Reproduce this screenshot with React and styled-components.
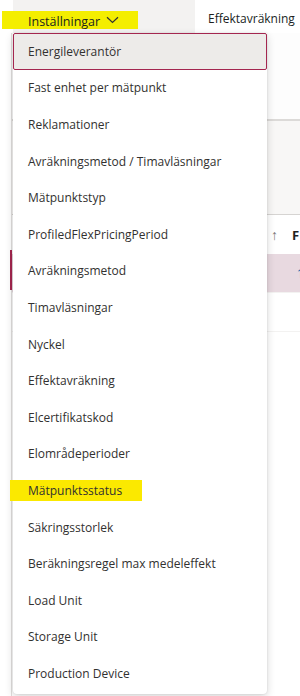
import React from 'react'
import styled, { createGlobalStyle } from 'styled-components'

const GlobalStyle = createGlobalStyle`
  html, body {
    margin: 0;
    padding: 0;
    background: #ffffff;
    font-family: "Open Sans", "Noto Sans", sans-serif;
    color: #323130;
  }
`

const items = [
    'Energileverantör',
    'Fast enhet per mätpunkt',
    'Reklamationer',
    'Avräkningsmetod / Timavläsningar',
    'Mätpunktstyp',
    'ProfiledFlexPricingPeriod',
    'Avräkningsmetod',
    'Timavläsningar',
    'Nyckel',
    'Effektavräkning',
    'Elcertifikatskod',
    'Elområdeperioder',
    'Mätpunktsstatus',
    'Säkringsstorlek',
    'Beräkningsregel max medeleffekt',
    'Load Unit',
    'Storage Unit',
    'Production Device',
]

function App() {
    return (
        <Page>
            <GlobalStyle />
            <TopBar>
                <Gutter />
                <TabStrip>
                    <Tab>
                        <Marker />
                        <span>Inställningar</span>
                        <svg width="13" height="8" viewBox="0 0 13 8">
                            <path d="M1 1.2 L6.5 6.4 L12 1.2" fill="none" stroke="#323130" strokeWidth="1.2" />
                        </svg>
                    </Tab>
                </TabStrip>
                <TabLabel>Effektavräkning</TabLabel>
            </TopBar>

            <Body>
                <SideRail>
                    <RailMark />
                </SideRail>
                <Main>
                    <Blank />
                    <CommandBand />
                    <HeaderRow>
                        <span className="arrow">↑</span>
                        <span className="col">F</span>
                    </HeaderRow>
                    <DataRow selected>
                        <span>1</span>
                    </DataRow>
                    <DataRow />
                </Main>
            </Body>

            {/* dropdown menu lies over the page */}
            <Menu>
                {items.map((label, i) => (
                    <MenuItem key={label} active={i === 0}>
                        {i === 12 ? <Highlight>{label}</Highlight> : label}
                    </MenuItem>
                ))}
            </Menu>
        </Page>
    )
}

export default App

const Page = styled.div`
    position: relative;
    width: 300px;
    height: 696px;
    overflow: hidden;
    background: #fff;
`

const TopBar = styled.div`
    display: flex;
    align-items: stretch;
    height: 33px;
`

const Gutter = styled.div`
    width: 13px;
    flex: none;
`

const TabStrip = styled.div`
    width: 182px;
    background: #f3f2f1;
    display: flex;
    align-items: flex-end;
`

const Tab = styled.div`
    position: relative;
    display: flex;
    align-items: center;
    gap: 6px;
    padding: 0 0 3px 15px;
    font-size: 12.5px;
    color: #201f1e;

    span, svg {
        position: relative;
    }
    svg {
        margin-top: -4px;
    }
`

// hand-drawn yellow highlighter stroke
const Marker = styled.div`
    position: absolute;
    left: -11px;
    top: -2px;
    width: 136px;
    height: 18px;
    background: #f4ee00;
    filter: blur(0.6px);
`

const TabLabel = styled.div`
    padding: 10px 0 0 13px;
    font-size: 12px;
    white-space: nowrap;
    color: #201f1e;
`

const Body = styled.div`
    display: flex;
    height: 663px;
`

const SideRail = styled.div`
    width: 11px;
    flex: none;
    border-right: 1px solid #e1dfdd;
    position: relative;
`

const RailMark = styled.div`
    position: absolute;
    right: -1px;
    top: 217px;
    width: 2px;
    height: 40px;
    background: #a4264f;
`

const Main = styled.div`
    flex: 1;
    display: flex;
    flex-direction: column;
`

const Blank = styled.div`
    height: 86px;
    background: #fdfdfd;
`

const CommandBand = styled.div`
    height: 93px;
    background: #f8f7f6;
    border-top: 2px solid #dcdad8;
    border-bottom: 1px solid #d6d4d2;
`

const HeaderRow = styled.div`
    height: 39px;
    display: flex;
    align-items: center;
    padding-left: 259px;
    font-size: 13px;

    .arrow {
        color: #7a7574;
        font-size: 14px;
    }
    .col {
        margin-left: 14px;
        font-weight: 700;
        color: #201f1e;
    }
`

const DataRow = styled.div`
    height: 38px;
    display: flex;
    align-items: center;
    padding-left: 285px;
    font-size: 12px;
    color: #0b5cad;
    background: ${p => (p.selected ? '#e8d9e0' : '#fff')};
    border-bottom: 1px solid #f3f2f1;
`

const Menu = styled.div`
    position: absolute;
    left: 13px;
    top: 33px;
    width: 254px;
    background: #fff;
    border-radius: 0 0 4px 4px;
    box-shadow: 0 3px 8px rgba(0, 0, 0, 0.16), 0 0 2px rgba(0, 0, 0, 0.12);
    padding-bottom: 2px;
`

const MenuItem = styled.div`
    height: 36.6px;
    box-sizing: border-box;
    display: flex;
    align-items: center;
    padding-left: ${p => (p.active ? '14px' : '15px')};
    font-size: 12px;
    color: #323130;
    white-space: nowrap;
    background: ${p => (p.active ? '#edebe9' : 'transparent')};
    border: ${p => (p.active ? '1px solid #a4264f' : 'none')};
    border-radius: ${p => (p.active ? '2px' : '0')};
`

const Highlight = styled.span`
    background: #fbe900;
    margin-left: -18px;
    padding: 2px 20px 2px 18px;
`
